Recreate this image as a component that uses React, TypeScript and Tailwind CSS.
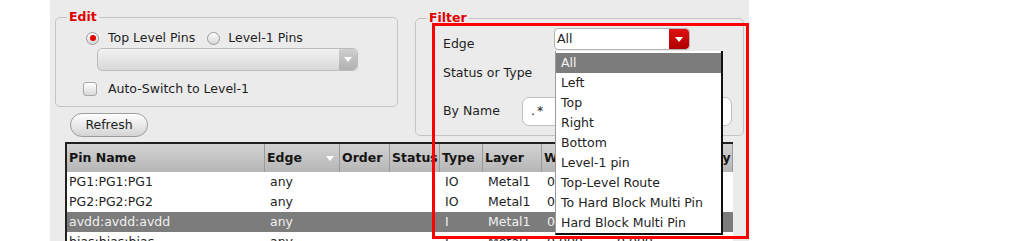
import React from "react";

const font = { fontFamily: '"DejaVu Sans", "Liberation Sans", sans-serif' };

function Radio({ checked }: { checked?: boolean }) {
  return (
    <span className="flex h-[13px] w-[13px] items-center justify-center rounded-full border border-[#9a9a9a] bg-linear-to-b from-[#ffffff] to-[#d6d6d6]">
      {checked && <span className="h-[6px] w-[6px] rounded-full bg-[#e00000]" />}
    </span>
  );
}

function Arrow({ color = "white" }: { color?: string }) {
  return (
    <svg width="8" height="5" viewBox="0 0 8 5">
      <polygon points="0,0 8,0 4,5" fill={color} />
    </svg>
  );
}

const columns = [
  { name: "Pin Name", w: "w-[198px]" },
  { name: "Edge", w: "w-[75px]", sort: true },
  { name: "Order", w: "w-[50px]" },
  { name: "Status", w: "w-[50px]" },
  { name: "Type", w: "w-[43px]" },
  { name: "Layer", w: "w-[59px]" },
  { name: "W", w: "w-[70px]" },
  { name: "Location", w: "w-[64px]" },
  { name: "Priority", w: "w-[57px]" },
];

const rows = [
  ["PG1:PG1:PG1", "any", "", "", "IO", "Metal1", "0.000", "0.000", ""],
  ["PG2:PG2:PG2", "any", "", "", "IO", "Metal1", "0.000", "0.000", ""],
  ["avdd:avdd:avdd", "any", "", "", "I", "Metal1", "0.000", "0.000", ""],
  ["bias:bias:bias", "any", "", "", "I", "Metal1", "0.000", "0.000", ""],
];

const edgeOptions = [
  "All",
  "Left",
  "Top",
  "Right",
  "Bottom",
  "Level-1 pin",
  "Top-Level Route",
  "To Hard Block Multi Pin",
  "Hard Block Multi Pin",
];

export default function App() {
  return (
    <div className="flex h-[241px] w-[1013px] overflow-hidden bg-white text-[12.5px] text-[#1e1e1e]" style={font}>
      <div className="relative ml-[50px] flex h-full w-[699px] flex-col bg-[#ebebeb] pl-[5px] pt-[9px]">
        <div className="flex items-start">
          <div className="flex w-[343px] flex-col">
            {/* Edit */}
            <fieldset className="h-[98px] rounded-[5px] border border-[#c4c4c4]">
              <legend className="ml-[11px] px-[2px] text-[12.5px] leading-[16px] font-bold text-[#e00000]">Edit</legend>
              <div className="mt-[3px] flex h-[20px] items-center pl-[30px]">
                <Radio checked />
                <span className="ml-[9px]">Top Level Pins</span>
                <span className="ml-[12px]">
                  <Radio />
                </span>
                <span className="ml-[8px]">Level-1 Pins</span>
              </div>
              <div className="ml-[41px] flex h-[23px] w-[261px] items-center justify-end rounded-[5px] border border-[#bcbcbc] bg-linear-to-b from-[#f2f2f2] to-[#d8d8d8]">
                <div className="flex h-full w-[18px] items-center justify-center rounded-r-[5px] bg-linear-to-b from-[#cfcfcf] to-[#b0b0b0]">
                  <Arrow />
                </div>
              </div>
              <div className="mt-[8px] flex h-[20px] items-center pl-[27px]">
                <span className="h-[14px] w-[14px] rounded-[3px] border border-[#a8a8a8] bg-linear-to-b from-[#ffffff] to-[#d8d8d8]" />
                <span className="ml-[11px]">Auto-Switch to Level-1</span>
              </div>
            </fieldset>
            <button className="ml-[15px] mt-[6px] flex h-[24px] w-[78px] items-center justify-center rounded-full border border-[#9c9c9c] bg-linear-to-b from-[#ffffff] to-[#d4d4d4] text-[12.5px]">
              Refresh
            </button>
          </div>

          {/* Filter */}
          <fieldset className="ml-[17px] mt-[1px] h-[126px] w-[329px] rounded-[5px] border border-[#c4c4c4]">
            <legend className="ml-[11px] px-[2px] text-[12.5px] leading-[16px] font-bold text-[#e00000]">Filter</legend>
            <div className="mt-[2px] flex h-[22px] items-start pl-[27px]">
              <span className="w-[111px] pt-[7px]">Edge</span>
              <div className="flex h-[22px] w-[136px] items-center rounded-[4px] border border-[#b4b4b4] bg-white">
                <span className="ml-[2px] flex-1">All</span>
                <div className="flex h-full w-[20px] items-center justify-center rounded-r-[4px] bg-linear-to-b from-[#e01010] to-[#b00000]">
                  <Arrow />
                </div>
              </div>
            </div>
            <div className="mt-[13px] flex h-[20px] items-center pl-[27px]">
              <span>Status or Type</span>
            </div>
            <div className="mt-[14px] flex h-[29px] items-center pl-[27px]">
              <span className="w-[79px]">By Name</span>
              <div className="flex h-[29px] w-[210px] items-center rounded-[7px] border border-[#c0c0c0] bg-white pl-[8px]">
                <span className="tracking-[2px]">.*</span>
              </div>
            </div>
          </fieldset>
        </div>

        {/* Table */}
        <div className="ml-[10px] mt-[5px] w-[668px] flex-1 overflow-hidden border-l-2 border-t-2 border-[#202020] bg-white">
          <div className="flex h-[28px] bg-linear-to-b from-[#d2d2d2] to-[#b6b6b6]">
            {columns.map((c) => (
              <div
                key={c.name}
                className={`${c.w} flex shrink-0 items-center overflow-hidden border-r border-[#9a9a9a] pl-[2px] font-bold whitespace-nowrap text-[#151515]`}
              >
                <span className="flex-1">{c.name}</span>
                {c.sort && (
                  <span className="mr-[5px]">
                    <Arrow />
                  </span>
                )}
              </div>
            ))}
          </div>
          {rows.map((r, i) => (
            <div key={i} className={`flex h-[20px] ${i === 2 ? "bg-[#7c7c7c] text-[#f0f0f0]" : ""}`}>
              {r.map((v, j) => (
                <div
                  key={j}
                  className={`${columns[j].w} flex shrink-0 items-center overflow-hidden whitespace-nowrap ${j === 0 ? "pl-[2px]" : "pl-[5px]"}`}
                >
                  {v}
                </div>
              ))}
            </div>
          ))}
        </div>

        {/* Edge dropdown list */}
        <div className="absolute left-[505px] top-[51px] flex h-[184px] w-[168px] flex-col border-l border-[#9a9a9a] border-r-2 border-b-2 border-r-[#111] border-b-[#111] bg-white pt-[2px]">
          {edgeOptions.map((o, i) => (
            <div
              key={o}
              className={`flex h-[20px] shrink-0 items-center pl-[5px] ${i === 0 ? "bg-[#7c7c7c] text-[#f4f4f4]" : "text-[#222]"}`}
            >
              {o}
            </div>
          ))}
        </div>

        {/* Highlight box */}
        <div className="absolute left-[382px] top-[23px] h-[216px] w-[317px] border-[3px] border-[#ff0000]" />
      </div>
    </div>
  );
}
